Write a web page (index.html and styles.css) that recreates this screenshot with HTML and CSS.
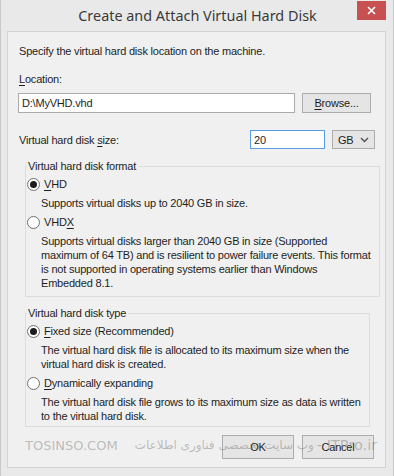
FILE: index.html
```html
<!DOCTYPE html>
<html lang="en">
<head>
  <meta charset="UTF-8">
  <title>Create and Attach Virtual Hard Disk</title>
  <link rel="stylesheet" href="styles.css">
</head>
<body>

  <div class="window">
    <!-- Title bar -->
    <div class="titlebar">
      <span class="title">Create and Attach Virtual Hard Disk</span>
      <button class="close-btn">
        <svg width="9" height="9" viewBox="0 0 9 9"><path d="M1 1L8 8M8 1L1 8" stroke="#fff" stroke-width="1.6"/></svg>
      </button>
    </div>

    <div class="panel">
      <p class="intro">Specify the virtual hard disk location on the machine.</p>

      <label class="field-label"><u>L</u>ocation:</label>
      <div class="location-row">
        <input class="text-input path-input" type="text" value="D:\MyVHD.vhd">
        <button class="btn browse-btn"><u>B</u>rowse...</button>
      </div>

      <div class="size-row">
        <span class="size-label">Virtual hard disk <u>s</u>ize:</span>
        <input class="text-input size-input" type="text" value="20">
        <div class="select">GB
          <svg width="9" height="6" viewBox="0 0 9 6"><path d="M1 1L4.5 4.5L8 1" fill="none" stroke="#555" stroke-width="1.5"/></svg>
        </div>
      </div>

      <!-- Format -->
      <fieldset class="group format-group">
        <legend>Virtual hard disk format</legend>
        <div class="option"><span class="radio checked"></span><span><u>V</u>HD</span></div>
        <p class="desc">Supports virtual disks up to 2040 GB in size.</p>
        <div class="option"><span class="radio"></span><span>VHD<u>X</u></span></div>
        <p class="desc">Supports virtual disks larger than 2040 GB in size (Supported<br>maximum of 64 TB) and is resilient to power failure events. This format<br>is not supported in operating systems earlier than Windows<br>Embedded 8.1.</p>
      </fieldset>

      <!-- Type -->
      <fieldset class="group type-group">
        <legend>Virtual hard disk type</legend>
        <div class="option"><span class="radio checked"></span><span><u>F</u>ixed size (Recommended)</span></div>
        <p class="desc">The virtual hard disk file is allocated to its maximum size when the<br>virtual hard disk is created.</p>
        <div class="option"><span class="radio"></span><span><u>D</u>ynamically expanding</span></div>
        <p class="desc">The virtual hard disk file grows to its maximum size as data is written<br>to the virtual hard disk.</p>
      </fieldset>

      <div class="actions">
        <button class="btn action-btn">OK</button>
        <button class="btn action-btn">Cancel</button>
      </div>

      <!-- watermark over the bottom of the dialog -->
      <div class="watermark">
        <span class="wm-site">TOSINSO.COM</span>
        <span class="wm-fa" dir="rtl">وب سایت تخصصی فناوری اطلاعات</span>
        <span class="wm-itpro">- ITPro.ir</span>
      </div>
    </div>
  </div>

</body>
</html>
```

FILE: styles.css
```css
body {
  margin: 0;
  font-family: 'Liberation Sans', Arial, sans-serif;
  font-size: 11px;
  letter-spacing: -0.2px;
  color: #1e1e1e;
  background: #e9e9e9;
}

u {
  text-decoration-thickness: 1px;
  text-underline-offset: 2px;
}

.window {
  width: 394px;
  height: 476px;
  box-sizing: border-box;
  background: #e9e9e9;
  border-left: 1px solid #c9c9c9;
  border-right: 1px solid #c9c9c9;
  padding: 0 7px 8px 6px;
}

.titlebar {
  height: 31px;
  position: relative;
  display: flex;
  justify-content: center;
}

.title {
  font-family: 'Noto Sans', sans-serif;
  font-size: 14.4px;
  letter-spacing: 0;
  color: #3a3a3a;
  line-height: 32px;
  margin-left: 2px;
}

.close-btn {
  position: absolute;
  right: 0;
  top: 1px;
  width: 29px;
  height: 19px;
  border: none;
  background: #c75050;
  padding: 0;
  display: flex;
  align-items: center;
  justify-content: center;
}

.panel {
  position: relative;
  height: 437px;
  box-sizing: border-box;
  background: #f0f0f0;
  border: 1px solid #d2d2d2;
  padding: 11px 10px 0 10px;
}

.intro {
  margin: 0 0 12px 1px;
  line-height: 16px;
}

.field-label {
  display: block;
  margin-left: 1px;
  line-height: 16px;
}

.location-row {
  display: flex;
  gap: 7px;
  margin-top: 6px;
}

.text-input {
  box-sizing: border-box;
  border: 1px solid #ababab;
  background: #fff;
  font: inherit;
  letter-spacing: inherit;
  color: #1e1e1e;
  padding: 0 3px;
  outline: none;
}

.path-input {
  width: 277px;
  height: 20px;
}

.btn {
  box-sizing: border-box;
  border: 1px solid #acacac;
  background: #e5e5e5;
  font: inherit;
  letter-spacing: inherit;
  color: #1e1e1e;
  padding: 0;
}

.browse-btn {
  width: 69px;
  height: 20px;
}

.size-row {
  display: flex;
  align-items: center;
  margin-top: 17px;
  height: 19px;
}

.size-label {
  flex: 1;
  margin-left: 1px;
}

.size-input {
  width: 75px;
  height: 19px;
  border-color: #569de5;
}

.select {
  box-sizing: border-box;
  width: 43px;
  height: 19px;
  margin-left: 7px;
  border: 1px solid #acacac;
  background: #e5e5e5;
  display: flex;
  align-items: center;
  justify-content: space-between;
  padding: 0 5px 0 5px;
}

.group {
  margin: 10px 9px 0 7px;
  border: 1px solid #dcdcdc;
  padding: 0 8px 6px 1px;
}

.group legend {
  padding: 0 2px 0 1px;
  margin-left: 0;
  line-height: 14px;
}

.option {
  display: flex;
  align-items: center;
  height: 16px;
  margin-top: 4px;
}

.format-group .option:first-of-type,
.type-group .option:first-of-type {
  margin-top: 3px;
}

.radio {
  box-sizing: border-box;
  width: 13px;
  height: 13px;
  border: 1px solid #707070;
  border-radius: 50%;
  background: #fff;
  margin-right: 4px;
  display: flex;
  align-items: center;
  justify-content: center;
}

.radio.checked::after {
  content: "";
  width: 7px;
  height: 7px;
  border-radius: 50%;
  background: #1c1c1c;
}

.desc {
  margin: 4px 0 0 14px;
  line-height: 14px;
  white-space: nowrap;
}

.type-group {
  margin-top: 9px;
  padding-bottom: 3px;
}

.actions {
  display: flex;
  justify-content: flex-end;
  gap: 8px;
  margin: 8px 1px 0 0;
}

.action-btn {
  width: 72px;
  height: 24px;
}

.watermark {
  position: absolute;
  left: 17px;
  top: 405px;
  display: flex;
  gap: 3px;
  align-items: center;
  white-space: nowrap;
  letter-spacing: 0;
  font-family: 'DejaVu Sans', sans-serif;
  color: rgba(110, 110, 110, 0.42);
  pointer-events: none;
}

.wm-site {
  font-size: 13px;
}

.wm-fa {
  font-size: 12px;
  margin-left: 14px;
}

.wm-itpro {
  font-size: 14.5px;
}
```
